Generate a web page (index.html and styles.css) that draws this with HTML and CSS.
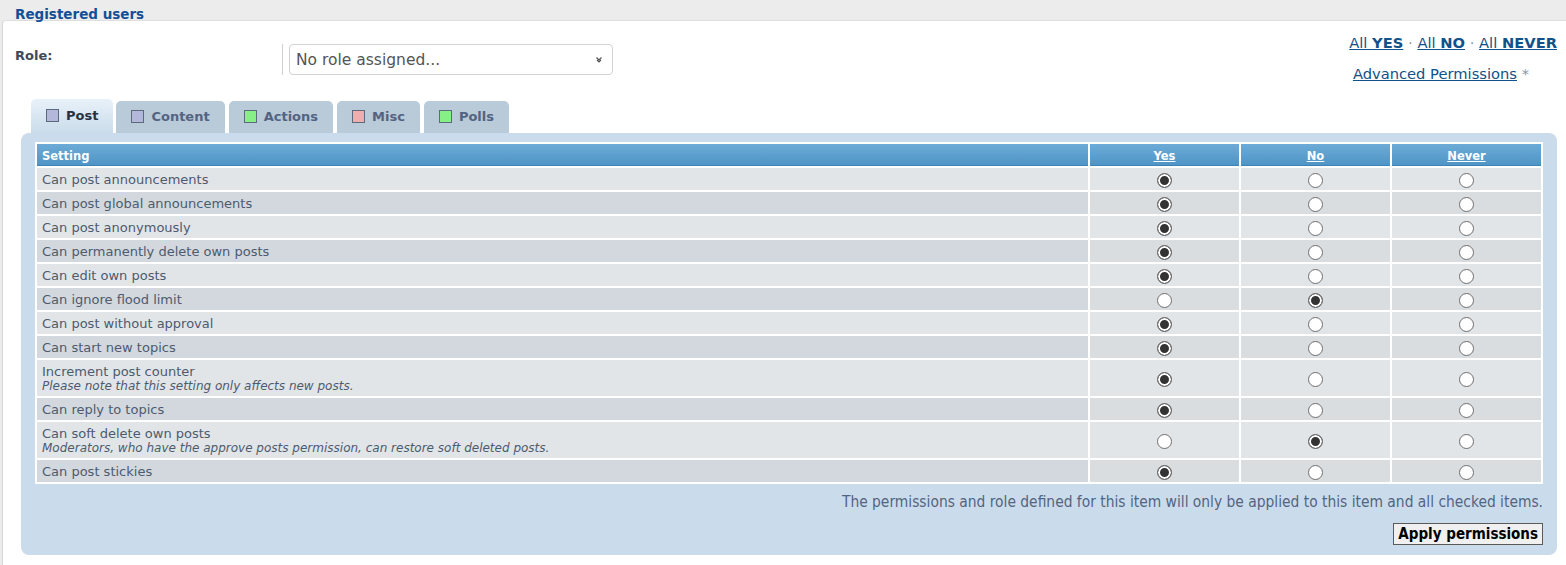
FILE: index.html
```html
<!DOCTYPE html>
<html lang="en">
<head>
    <meta charset="UTF-8">
    <title>Permissions - Registered users</title>
    <link rel="stylesheet" href="styles.css">
</head>
<body>
    <h3 class="group-title">Registered users</h3>
    <div class="frame">
        <div class="role-row">
            <div class="role-field">
                <label class="role-label">Role:</label>
                <div class="select-box">
                    <span>No role assigned...</span>
                    <svg width="8" height="7" viewBox="0 0 8 7"><path d="M1.5 1.5l2.5 2.5 2.5-2.5M2 4l2 2 2-2" fill="none" stroke="#555" stroke-width="1.2"/></svg>
                </div>
            </div>
            <div class="quick-links">
                <p>
                    <a href="#">All <b>YES</b></a> <span class="dot">&middot;</span>
                    <a href="#">All <b>NO</b></a> <span class="dot">&middot;</span>
                    <a href="#">All <b>NEVER</b></a>
                </p>
                <p class="adv"><a href="#">Advanced Permissions</a> <span class="star">*</span></p>
            </div>
        </div>

        <ul class="tabs">
            <li class="tab active"><span class="swatch lav"></span>Post</li>
            <li class="tab"><span class="swatch lav"></span>Content</li>
            <li class="tab"><span class="swatch green"></span>Actions</li>
            <li class="tab"><span class="swatch pink"></span>Misc</li>
            <li class="tab"><span class="swatch green"></span>Polls</li>
        </ul>

        <div class="panel">
            <table class="perm-table">
                <colgroup>
                    <col>
                    <col class="opt">
                    <col class="opt">
                    <col class="opt">
                </colgroup>
                <thead>
                    <tr>
                        <th class="setting-head">Setting</th>
                        <th><a href="#">Yes</a></th>
                        <th><a href="#">No</a></th>
                        <th><a href="#">Never</a></th>
                    </tr>
                </thead>
                <tbody id="perm-rows"></tbody>
            </table>

            <p class="perm-note">The permissions and role defined for this item will only be applied to this item and all checked items.</p>
            <div class="actions">
                <button class="apply-btn">Apply permissions</button>
            </div>
        </div>
    </div>

    <script>
        const settings = [
            ['Can post announcements', '', 0],
            ['Can post global announcements', '', 0],
            ['Can post anonymously', '', 0],
            ['Can permanently delete own posts', '', 0],
            ['Can edit own posts', '', 0],
            ['Can ignore flood limit', '', 1],
            ['Can post without approval', '', 0],
            ['Can start new topics', '', 0],
            ['Increment post counter', 'Please note that this setting only affects new posts.', 0],
            ['Can reply to topics', '', 0],
            ['Can soft delete own posts', 'Moderators, who have the approve posts permission, can restore soft deleted posts.', 1],
            ['Can post stickies', '', 0]
        ];

        const tbody = document.getElementById('perm-rows');

        settings.forEach((item, i) => {
            const tr = document.createElement('tr');
            if (i % 2 === 1) {
                tr.className = 'alt';
            }

            let html = '<td class="setting">' + item[0];
            if (item[1]) {
                html += '<br><em>' + item[1] + '</em>';
            }
            html += '</td>';

            for (let k = 0; k < 3; k++) {
                const checked = item[2] === k ? ' checked' : '';
                html += '<td class="choice"><input type="radio" name="setting' + i + '"' + checked + '></td>';
            }

            tr.innerHTML = html;
            tbody.appendChild(tr);
        });
    </script>
</body>
</html>
```

FILE: styles.css
```css
body {
    margin: 0;
    background-color: #ececec;
    font-family: "DejaVu Sans", Verdana, sans-serif;
    color: #4c5b6f;
    overflow: hidden;
}

.group-title {
    margin: 0;
    height: 20px;
    padding: 6px 0 0 15px;
    box-sizing: border-box;
    font-size: 13.5px;
    line-height: 16px;
    color: #115098;
    position: relative;
    z-index: 1;
}

.frame {
    margin: 0 -12px 0 2px;
    padding: 12px 21px 0 12px;
    box-sizing: border-box;
    height: 545px;
    background-color: #fff;
    border-top: 1px solid #dedede;
    border-left: 1px solid #d6d6d6;
    border-top-left-radius: 4px;
}

/* role select + quick links */
.role-row {
    display: flex;
    justify-content: space-between;
    align-items: flex-start;
}

.role-field {
    display: flex;
    margin-top: 11px;
}

.role-label {
    width: 268px;
    height: 31px;
    padding-top: 4px;
    box-sizing: border-box;
    border-right: 1px solid #cfcfcf;
    font-size: 13px;
    font-weight: bold;
    line-height: 16px;
    color: #3c4a5c;
}

.select-box {
    width: 324px;
    height: 31px;
    margin-left: 6px;
    padding: 0 9px 0 6px;
    box-sizing: border-box;
    display: flex;
    align-items: center;
    justify-content: space-between;
    border: 1px solid #d3d3d3;
    border-radius: 4px;
    font-size: 15.5px;
    color: #555;
}

.quick-links {
    text-align: right;
    font-size: 14.7px;
}

.quick-links p {
    margin: 0;
    line-height: 20px;
}

.quick-links .adv {
    margin-top: 11px;
    padding-right: 28px;
}

.quick-links a {
    color: #105289;
}

.quick-links .dot,
.quick-links .star {
    color: #8a98a8;
}

/* tabs */
.tabs {
    list-style: none;
    margin: 15px 0 0 16px;
    padding: 0;
    display: flex;
    align-items: flex-end;
    gap: 4px;
}

.tab {
    height: 32px;
    padding: 0 15px 2px;
    box-sizing: border-box;
    display: flex;
    align-items: center;
    gap: 7px;
    background-color: #b9cad8;
    border-radius: 5px 5px 0 0;
    font-size: 13px;
    font-weight: bold;
    color: #536482;
}

.tab.active {
    height: 34px;
    padding-bottom: 1px;
    background: linear-gradient(#e8f1f9, #cadceb);
    color: #28313f;
    margin-right: -1px;
}

.swatch {
    width: 11px;
    height: 11px;
    border: 1px solid #5b6a7c;
}

.swatch.lav {
    background-color: #b3b8da;
}

.swatch.green {
    background-color: #86ef86;
}

.swatch.pink {
    background-color: #efaeae;
}

/* panel */
.panel {
    margin-left: 6px;
    padding: 9px 14px 10px;
    background-color: #cadceb;
    border-radius: 8px;
}

.perm-table {
    width: 100%;
    table-layout: fixed;
    border-collapse: separate;
    border-spacing: 2px;
    background-color: #fff;
    font-size: 13px;
}

.perm-table col.opt {
    width: 149px;
}

.perm-table th {
    height: 22px;
    padding: 2px 5px 0;
    background: linear-gradient(#6cabd7, #4f95c6);
    border-bottom: 1px solid #3f82b6;
    box-sizing: border-box;
    color: #fff;
    font-size: 11.5px;
    font-weight: bold;
    text-align: center;
}

.perm-table th.setting-head {
    text-align: left;
}

.perm-table th a {
    color: #fff;
}

.perm-table td {
    padding: 5px 5px 3px;
    line-height: 14px;
    background-color: #e2e5e8;
}

.perm-table tr.alt td {
    background-color: #dadde0;
}

.perm-table tr.alt td.setting {
    background-color: #d3d8de;
}

.perm-table td em {
    font-size: 12px;
}

.perm-table td.choice {
    padding: 3px 0 0;
    text-align: center;
    vertical-align: middle;
}

.choice input {
    appearance: none;
    width: 15px;
    height: 15px;
    display: block;
    margin: 0 auto;
    border: 1px solid #6e6e6e;
    border-radius: 50%;
    background-color: #fff;
}

.choice input:checked {
    background-color: #333;
    box-shadow: inset 0 0 0 2px #fff;
}

.perm-note {
    margin: 9px 0 0;
    line-height: 18px;
    text-align: right;
    font-family: "DejaVu Sans Condensed", "DejaVu Sans", sans-serif;
    font-size: 15.4px;
    color: #536482;
}

.actions {
    margin-top: 12px;
    text-align: right;
}

.apply-btn {
    height: 22px;
    padding: 0 4px;
    font-family: "DejaVu Sans Condensed", "DejaVu Sans", sans-serif;
    font-size: 15px;
    font-weight: bold;
    color: #000;
    background-color: #f0f0f0;
    border: 1px solid #5a5a5a;
    border-radius: 0;
}
```
